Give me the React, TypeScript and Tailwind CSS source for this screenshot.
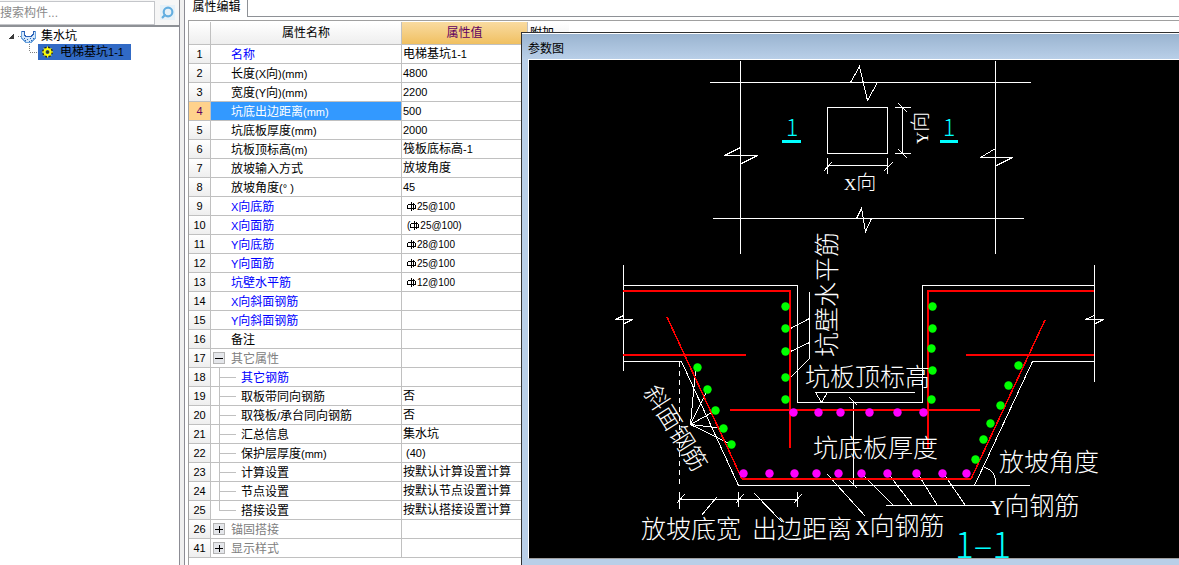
import type { ReactNode } from 'react'
import { Search } from 'lucide-react'

type Row = {
  no: number
  name: string
  value?: string
  kind?: 'key' | 'group' | 'child' | 'childKey'
  open?: boolean
  last?: boolean
  rebar?: boolean
}

const rows: Row[] = [
  { no: 1, name: '名称', value: '电梯基坑1-1', kind: 'key' },
  { no: 2, name: '长度(X向)(mm)', value: '4800' },
  { no: 3, name: '宽度(Y向)(mm)', value: '2200' },
  { no: 4, name: '坑底出边距离(mm)', value: '500' },
  { no: 5, name: '坑底板厚度(mm)', value: '2000' },
  { no: 6, name: '坑板顶标高(m)', value: '筏板底标高-1' },
  { no: 7, name: '放坡输入方式', value: '放坡角度' },
  { no: 8, name: '放坡角度(° )', value: '45' },
  { no: 9, name: 'X向底筋', value: '25@100', kind: 'key', rebar: true },
  { no: 10, name: 'X向面筋', value: '(25@100)', kind: 'key', rebar: true },
  { no: 11, name: 'Y向底筋', value: '28@100', kind: 'key', rebar: true },
  { no: 12, name: 'Y向面筋', value: '25@100', kind: 'key', rebar: true },
  { no: 13, name: '坑壁水平筋', value: '12@100', kind: 'key', rebar: true },
  { no: 14, name: 'X向斜面钢筋', kind: 'key' },
  { no: 15, name: 'Y向斜面钢筋', kind: 'key' },
  { no: 16, name: '备注' },
  { no: 17, name: '其它属性', kind: 'group', open: true },
  { no: 18, name: '其它钢筋', kind: 'childKey' },
  { no: 19, name: '取板带同向钢筋', value: '否', kind: 'child' },
  { no: 20, name: '取筏板/承台同向钢筋', value: '否', kind: 'child' },
  { no: 21, name: '汇总信息', value: '集水坑', kind: 'child' },
  { no: 22, name: '保护层厚度(mm)', value: ' (40)', kind: 'child' },
  { no: 23, name: '计算设置', value: '按默认计算设置计算', kind: 'child' },
  { no: 24, name: '节点设置', value: '按默认节点设置计算', kind: 'child' },
  { no: 25, name: '搭接设置', value: '按默认搭接设置计算', kind: 'child', last: true },
  { no: 26, name: '锚固搭接', kind: 'group' },
  { no: 41, name: '显示样式', kind: 'group' },
]

const selectedRow = 4

// Latin runs are set one size smaller than the Chinese around them
function Mixed({ children }: { children: string }) {
  return (
    <>
      {children.split(/([\x20-\x7e°]+)/).map((part, i) =>
        i % 2 ? <span key={i} className="text-[11px] whitespace-pre">{part}</span> : part
      )}
    </>
  )
}

function RebarSign() {
  return (
    <svg width="9" height="9" viewBox="0 0 9 9" fill="none" stroke="currentColor" shapeRendering="crispEdges" className="mr-px inline-block align-[-1px]">
      <path d="M4.500 0v9M1 2.500h7M0 6.500h9M0.500 3v3M8.500 3v3M6.500 1v7" />
    </svg>
  )
}

function RebarValue({ value }: { value: string }) {
  const wrapped = value.startsWith('(')
  return (
    <span className="pl-1 text-[10px]">
      {wrapped && '('}
      <RebarSign />
      {wrapped ? value.slice(1) : value}
    </span>
  )
}

function NameCell({ row }: { row: Row }) {
  if (row.kind === 'group') {
    return (
      <div className="flex h-[18px] items-center text-[#808080]">
        <div className="w-5 shrink-0">
          <button
            aria-label={row.name}
            aria-expanded={!!row.open}
            className="ml-[2px] flex size-3 items-center justify-center border border-[#b4b4b4] bg-[#e4e6ea] text-black"
          >
            <svg width="8" height="8" viewBox="0 0 8 8" stroke="currentColor" shapeRendering="crispEdges">
              <path d={row.open ? 'M0 4.500h8' : 'M0 4.500h8M4.500 1v7'} />
            </svg>
          </button>
        </div>
        <span className="pt-[2px]">{row.name}</span>
      </div>
    )
  }
  if (row.kind === 'child' || row.kind === 'childKey') {
    return (
      <div className={row.kind === 'childKey' ? 'flex h-[18px] items-center text-[#0000ff]' : 'flex h-[18px] items-center'}>
        <svg width="30" height="18" viewBox="0 0 30 18" stroke="#c0c0c0" shapeRendering="crispEdges" className="shrink-0">
          <path d={row.last ? 'M8.500 0v9M8 9.500h17' : 'M8.500 0v18M8 9.500h17'} fill="none" />
        </svg>
        <span className="pt-[2px]"><Mixed>{row.name}</Mixed></span>
      </div>
    )
  }
  return (
    <div className={row.kind === 'key' ? 'flex h-[18px] items-center pl-5 text-[#0000ff]' : 'flex h-[18px] items-center pl-5'}>
      <span className="pt-[2px]"><Mixed>{row.name}</Mixed></span>
    </div>
  )
}

function Sidebar() {
  return (
    <aside className="flex w-[180px] shrink-0 flex-col border-r border-[#8c8c94] bg-white">
      <div className="flex h-[27px] items-center border-b-2 border-[#8e9196] bg-[#f6f6f6]">
        <input
          aria-label="搜索构件"
          placeholder="搜索构件..."
          className="h-6 w-[155px] border border-l-0 border-[#c4c6ca] bg-white text-xs outline-none placeholder:text-[#8a8a8a]"
        />
        <button aria-label="搜索" className="ml-[5px] bg-[#e6f1f8] p-px text-[#63aee0]">
          <Search size={13} strokeWidth={4} className="-scale-x-100" />
        </button>
      </div>
      <ul className="pt-px text-xs">
        <li>
          <div className="flex h-4 items-center">
            <svg width="41" height="16" viewBox="0 0 41 16" shapeRendering="crispEdges" className="shrink-0">
              <path d="M8 11L14 5V11Z" fill="#3c3c3c" />
              <path d="M18 8.500H21" stroke="#808080" strokeDasharray="1 1" />
              <path d="M22 4h2v3l2 2h5l2-2V4h2v7l-3 3h-7l-3-3z" fill="#d4e8fa" />
              <path d="M21 3.500h3v3l2 2h5l2-2v-3h3" fill="none" stroke="#2a62b8" />
              <path d="M21.500 3v7l4 4h6l4-4V3" fill="none" stroke="#6aa2dc" />
              <path d="M24 10.500h1M27 11.500h1M30 10.500h1M33 10.500h1M25 12.500h1M29 13.500h1M31 12.500h1" stroke="#2a62b8" />
            </svg>
            集水坑
          </div>
          <ul>
            <li className="flex h-4 items-center">
              <svg width="38" height="16" viewBox="0 0 38 16" className="shrink-0" fill="none" stroke="#808080" strokeDasharray="1 1" shapeRendering="crispEdges">
                <path d="M29.500 0v8M30 8.500h8" />
              </svg>
              <a href="#pit" className="flex h-4 items-center bg-[#316ac5] pr-[7px] text-black">
                <svg width="22" height="16" viewBox="0 0 22 16" fill="none">
                  <circle cx="9.500" cy="8" r="4.500" stroke="#2a2a10" strokeWidth="2" strokeDasharray="2 1.500" />
                  <circle cx="9.500" cy="8" r="3" stroke="#ffff00" strokeWidth="2" />
                  <path d="M9.500 2.500v3M9.500 10.500v3M4 8h3M12 8h3M5.600 4.100l2 2M11.400 9.900l2 2M5.600 11.900l2-2M11.400 6.100l2-2" stroke="#ffff00" />
                  <circle cx="9.500" cy="8" r="1.500" fill="#3a3a10" />
                </svg>
                <Mixed>电梯基坑1-1</Mixed>
              </a>
            </li>
          </ul>
        </li>
      </ul>
    </aside>
  )
}

function PropertyTable() {
  return (
    <table className="w-[380px] table-fixed border-separate border-spacing-0 text-xs">
      <colgroup>
        <col className="w-[22px]" />
        <col className="w-[191px]" />
        <col className="w-[126px]" />
        <col />
      </colgroup>
      <thead>
        <tr className="h-[23px]">
          <th aria-label="序号" className="border-r border-b border-[#c0c0c0] bg-linear-to-b from-white to-[#eeeeee] p-0" />
          <th className="border-r border-b border-[#c0c0c0] bg-linear-to-b from-white to-[#eeeeee] p-0 font-normal">属性名称</th>
          <th className="border-r border-b border-[#c0c0c0] bg-linear-to-b from-[#f9dba0] to-[#f0c060] p-0 font-normal text-[#600060]">属性值</th>
          <th className="border-b border-[#c0c0c0] bg-linear-to-b from-white to-[#eeeeee] p-0 pl-[2px] text-left font-normal">附加</th>
        </tr>
      </thead>
      <tbody>
        {rows.map((row) => {
          const selected = row.no === selectedRow
          return (
            <tr key={row.no} className="h-[19px] leading-[18px]">
              <th
                scope="row"
                className={
                  selected
                    ? 'border-r border-b border-[#c0c0c0] bg-[#ffd28c] p-0 text-[11px] font-normal text-[#600060]'
                    : 'border-r border-b border-[#c0c0c0] bg-linear-to-b from-white to-[#eeeeee] p-0 text-[11px] font-normal'
                }
              >
                {row.no}
              </th>
              <td className={selected ? 'border-r border-b border-[#c0c0c0] bg-[#3399ff] p-0 text-white' : 'border-r border-b border-[#c0c0c0] p-0'}>
                <NameCell row={row} />
              </td>
              <td className="border-r border-b border-[#c0c0c0] p-0 pl-px whitespace-nowrap">
                <div className="h-[18px]">
                  {row.value && (row.rebar ? <RebarValue value={row.value} /> : <Mixed>{row.value}</Mixed>)}
                </div>
              </td>
              <td className="border-b border-[#c0c0c0] p-0" />
            </tr>
          )
        })}
      </tbody>
    </table>
  )
}

const greenDots = [
  [785, 306], [785, 328], [785, 351], [785, 377], [785, 399],
  [932, 306], [932, 328], [931, 348], [932, 370], [931, 399],
  [697, 367], [707, 389], [715, 410], [723, 428], [731, 444],
  [1018, 365], [1008, 385], [1000, 405], [990, 423], [983, 439], [975, 459],
]

const magentaDots = [
  [793, 412], [818, 412], [840, 412], [869, 412], [897, 412], [923, 412],
  [743, 473], [769, 473], [794, 473], [816, 473], [838, 473], [861, 473],
  [887, 473], [916, 473], [942, 473], [966, 473],
]

function Label({ x, y, rotate, size = 25, children }: { x: number; y: number; rotate?: number; size?: number; children: ReactNode }) {
  return (
    <text x={x} y={y} fontSize={size} transform={rotate ? `rotate(${rotate} ${x} ${y})` : undefined}>
      {children}
    </text>
  )
}

function SectionDrawing() {
  return (
    <svg
      viewBox="529 60 650 498"
      preserveAspectRatio="xMinYMin slice"
      role="img"
      aria-label="参数图"
      className="size-full bg-black"
    >
      <g transform="translate(0.5 0.5)" fill="none" stroke="#fff" shapeRendering="crispEdges">
        {/* plan view */}
        <path d="M740 60V253M995 60V253M709 82H850L859 66L867 100L877 82H1030M850 82H877" />
        <path d="M712 218H856L861 208L865 231L871 218H1023M856 218H871" />
        <path d="M740 147L724 155H757L741 163M995 148L980 157H1012L996 165" />
        <path d="M827 107H887V153H827Z" />
        <path d="M827 165H887M827 157V173M887 157V173M823 171L831 162M883 171L892 162" />
        <path d="M902 107V153M894 107H910M894 153H910M898 103L907 112M898 149L907 158" />

        {/* section outline */}
        <path d="M623 264V370M1094 264V381M623 285H797V402H922V285H1094" />
        <path d="M623 361H681L738 485H1029M974 485L1032 361H1094" />
        <path d="M679 361V485" strokeDasharray="5 4" />
        <path d="M623 315L615 319H632L624 323M1094 315L1085 319H1103L1095 323" />

        {/* leaders and dimensions */}
        <path d="M809 291V358L790 377M790 328L809 318M790 351L809 342" />
        <path d="M815 392H914M815 392L821 402L827 392" />
        <path d="M853 402V485M849 397L857 405M849 480L857 488" />
        <path d="M690 424L695 370M690 424L707 389M690 424L715 410M690 424L723 428M690 424L731 444" />
        <path d="M679 499H797M679 491V508M738 491V506M797 491V506M676 503L684 494M735 503L743 494M793 503L801 494" />
        <path d="M716 497L701 515M754 493L782 522M827 474L865 516" />
        <path d="M885 505H993M864 476L893 505M890 476L912 505M919 476L937 505M945 476L965 505" />
        <path d="M984 467Q996 470 995 485" />
      </g>

      {/* rebar lines, two units thick, so they sit on whole coordinates */}
      <g fill="none" stroke="#f00" strokeWidth="2" shapeRendering="crispEdges">
        <path d="M623 291H790V448M623 355H746M1094 291H928V448M966 355H1094M730 410H980M742 479H971" />
        <path d="M667 317L742 479M971 479L1045 320" strokeWidth="1.500" />
      </g>

      <g fill="#00ff00">
        {greenDots.map(([x, y]) => <circle key={`${x}-${y}`} cx={x + 0.5} cy={y + 0.5} r="4.200" />)}
      </g>
      <g fill="#ff00ff">
        {magentaDots.map(([x, y]) => <circle key={`${x}-${y}`} cx={x + 0.5} cy={y + 0.5} r="4.200" />)}
      </g>

      <g fill="#fff" className="font-['Liberation_Serif','Noto_Sans_CJK_SC',serif] font-light">
        <Label x={844} y={190} size={20}><tspan fontSize="17">X</tspan>向</Label>
        <Label x={928} y={144} size={20} rotate={-90}><tspan fontSize="17">Y</tspan>向</Label>
        <Label x={836} y={357} rotate={-90}>坑壁水平筋</Label>
        <Label x={643} y={392} size={24} rotate={58}>斜面钢筋</Label>
        <Label x={805} y={386}>坑板顶标高</Label>
        <Label x={813} y={457}>坑底板厚度</Label>
        <Label x={999} y={471}>放坡角度</Label>
        <Label x={990} y={515}><tspan fontSize="20">Y</tspan>向钢筋</Label>
        <Label x={855} y={535}><tspan fontSize="20">X</tspan>向钢筋</Label>
        <Label x={641} y={538}>放坡底宽</Label>
        <Label x={752} y={538}>出边距离</Label>
      </g>
      <g fill="#00ffff" className="font-['Noto_Sans_CJK_SC',sans-serif] font-light">
        <Label x={786} y={136} size={23}>1</Label>
        <Label x={943} y={136} size={23}>1</Label>
        <Label x={955} y={558} size={35}>1–1</Label>
        <path d="M782 140h19v3h-19zM940 140h18v3h-18z" />
      </g>
    </svg>
  )
}

function ParameterWindow() {
  return (
    <section className="absolute top-8 right-0 bottom-0 left-[521px] flex flex-col border-t border-l border-[#303030] bg-[#b9cfe8]">
      <h2 className="h-[26px] shrink-0 border-t border-white bg-linear-to-b from-[#9ab4d0] to-[#b9cfe8] pt-[5px] pl-[6px] text-xs leading-5">参数图</h2>
      <div className="mb-[6px] ml-[6px] min-h-0 flex-1 border-t border-b border-l border-t-white border-b-[#a0a0a0] border-l-white">
        <SectionDrawing />
      </div>
    </section>
  )
}

export default function App() {
  return (
    <div className="relative flex h-screen overflow-hidden bg-white font-['Liberation_Sans','Noto_Sans_CJK_SC',sans-serif] text-black">
      <Sidebar />
      <div className="w-[5px] shrink-0 border-r border-[#8c8c94] bg-[#f0f0f0]" />
      <main className="flex min-w-0 flex-1 flex-col">
        <div className="flex h-[17px] shrink-0" role="tablist">
          <button role="tab" aria-selected="true" className="w-[63px] border-r border-[#8e9196] pb-1 pl-px text-xs leading-3">
            属性编辑
          </button>
          <div className="flex-1 border-b border-[#8e9196]" />
        </div>
        <div className="mt-[3px] ml-[3px] flex-1 overflow-hidden border-t border-l border-[#a0a0a0] pt-px">
          <PropertyTable />
        </div>
      </main>
      <ParameterWindow />
    </div>
  )
}
